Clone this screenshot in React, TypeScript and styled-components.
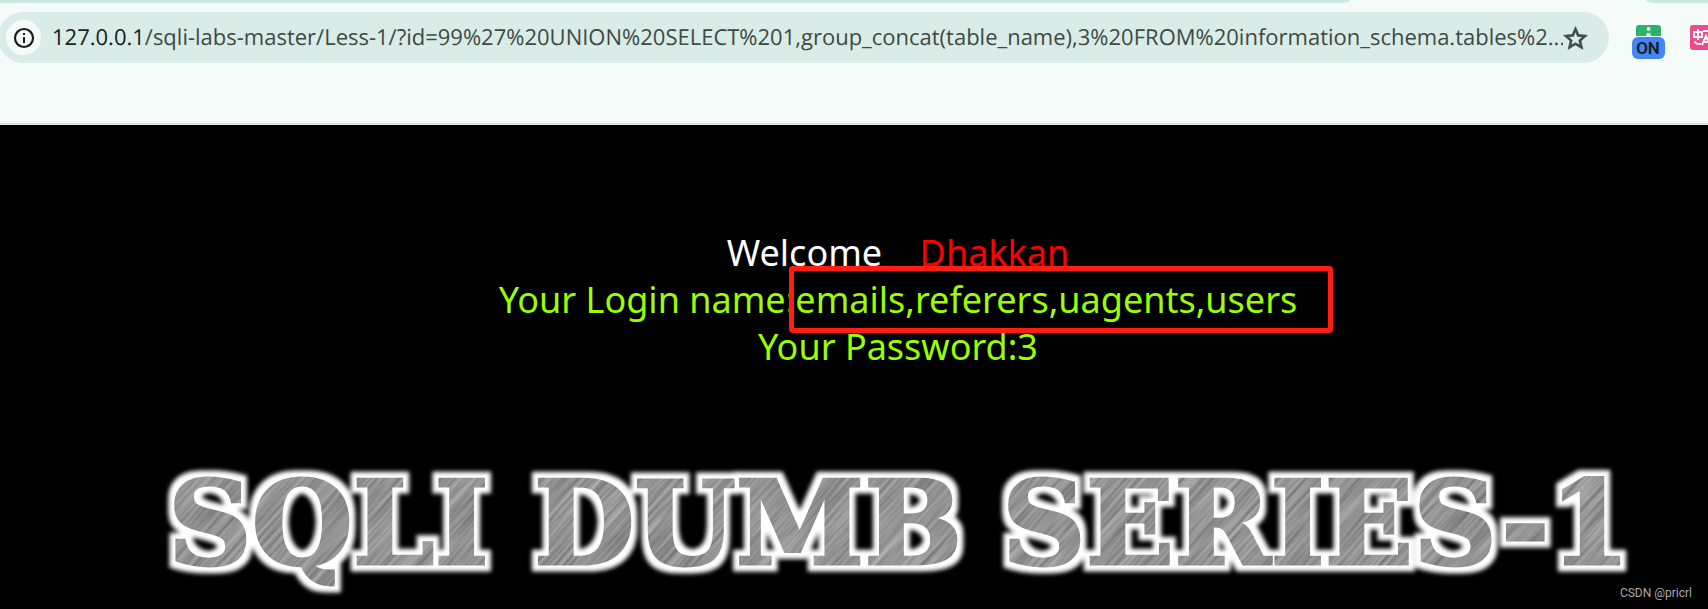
import React from "react";
import styled, { createGlobalStyle } from "styled-components";

const Global = createGlobalStyle`
  * { box-sizing: border-box; }
  body { margin: 0; background: #000; overflow-x: hidden; }
`;

const Page = styled.div`
  min-height: 100vh;
  display: flex;
  flex-direction: column;
  background: #000;
  overflow: hidden;
`;

const Browser = styled.header`
  background: #f5fbf8;
  border-bottom: 2px solid #d9e5e0;
  height: 125px;
  font-family: "Open Sans", "Noto Sans", sans-serif;
  text-rendering: geometricPrecision;
`;

const TabStrip = styled.div`
  display: flex;
  justify-content: space-between;
  height: 3px;
`;

const TabEdge = styled.div<{ $side: "left" | "right" }>`
  background: #cbe8e1;
  ${(p) =>
    p.$side === "left"
      ? "flex: 1; margin-right: 296px; border-bottom-right-radius: 10px 3px;"
      : "width: 62px; border-bottom-left-radius: 10px 3px;"}
`;

const Toolbar = styled.div`
  display: flex;
  align-items: center;
  padding-top: 9px;
`;

const AddressBar = styled.div`
  flex: 1;
  min-width: 0;
  height: 51px;
  margin-left: -2px;
  padding: 0 21px 0 8px;
  border-radius: 26px;
  background: #daece7;
  display: flex;
  align-items: center;
`;

const InfoButton = styled.button`
  width: 35px;
  height: 35px;
  flex: none;
  margin-right: 11px;
  padding: 0;
  border: 0;
  border-radius: 50%;
  background: #f5fbf8;
  display: grid;
  place-items: center;
`;

const Host = styled.label`
  padding-bottom: 2px;
  font-size: 22px;
  line-height: 32px;
  color: #171d1b;
`;

const UrlInput = styled.input`
  flex: 1;
  min-width: 0;
  height: 34px;
  padding: 0 0 2px;
  border: 0;
  outline: 0;
  background: transparent;
  font: 22px "Open Sans", "Noto Sans", sans-serif;
  text-rendering: geometricPrecision;
  color: #3f4946;
`;

const IconButton = styled.button`
  flex: none;
  padding: 0;
  border: 0;
  background: none;
  display: grid;
`;

const Extensions = styled.div`
  display: flex;
  align-items: center;
  gap: 25px;
  width: 99px;
  padding: 9px 0 0 23px;
  overflow: hidden;
`;

const Content = styled.main`
  flex: 1;
  padding: 104px 0 0 88px;
  display: flex;
  flex-direction: column;
  align-items: center;
  position: relative;
`;

const Message = styled.section`
  font-family: "Noto Sans", "Open Sans", sans-serif;
  font-size: 36px;
  line-height: 47px;
  text-align: center;
  white-space: pre;
`;

const Line = styled.p<{ $color: string }>`
  margin: 0;
  color: ${(p) => p.$color};
`;

const Name = styled.span`
  color: #f00;
`;

const Marked = styled.span`
  position: relative;

  &::after {
    content: "";
    position: absolute;
    inset: -9px -36px -9px -6px;
    border: 5px solid #ff1e10;
    border-radius: 4px;
  }
`;

const Logo = styled.svg`
  display: block;
  width: 100%;
  max-width: 1620px;
  margin-top: 69px;
`;

const Watermark = styled.footer`
  position: absolute;
  right: 16px;
  bottom: 8px;
  font: 12px/16px Roboto, "Liberation Sans", sans-serif;
  color: #aaa;
`;

const InfoIcon = () => (
  <svg width="22" height="22" viewBox="0 0 22 22" fill="none">
    <circle cx="11" cy="11" r="9" stroke="#171d1b" strokeWidth="2.2" />
    <path d="M11 10v6M11 6v2" stroke="#171d1b" strokeWidth="2" />
  </svg>
);

const StarIcon = () => (
  <svg width="25" height="24" viewBox="1.5 1.5 21 20" fill="#3f4946" stroke="#3f4946" strokeWidth="0.6">
    <path d="M22 9.24l-7.19-.62L12 2 9.19 8.63 2 9.24l5.46 4.73L5.82 21 12 17.27 18.18 21l-1.63-7.03L22 9.24zM12 15.4l-3.76 2.27 1-4.28-3.32-2.88 4.38-.38L12 6.1l1.71 4.04 4.38.38-3.32 2.88 1 4.28L12 15.4z" />
  </svg>
);

const ProxyIcon = () => (
  <svg width="33" height="34" viewBox="0 0 33 34">
    <path d="M7 0h19a3 3 0 0 1 3 3v8H4V3a3 3 0 0 1 3-3z" fill="#2bb36b" />
    <circle cx="16.5" cy="4" r="2" fill="#e8fff2" />
    <path d="M14 11l1-3h3l1 3z" fill="#e8fff2" />
    <rect y="12" width="33" height="22" rx="6" fill="#4285f4" />
    <text x="16" y="29" textAnchor="middle" fontFamily="Roboto, sans-serif" fontWeight="600" fontSize="17" fill="#171d1b">ON</text>
  </svg>
);

const TranslateIcon = () => (
  <svg width="26" height="34" viewBox="0 0 26 34">
    <rect width="26" height="25" rx="3" fill="#ee4b8b" />
    <path d="M4 7h8v5H4zM8 4v11M5 16c0 3 2 3 6 3M13 6h6v4M12 20l4-9 4 9M14 17h5" fill="none" stroke="#fff" strokeWidth="2" />
  </svg>
);

const words = [
  { text: "SQLI", x: 80 },
  { text: "DUMB", x: 446 },
  { text: "SERIES-1", x: 914 },
];

const SeriesLogo = () => (
  <Logo viewBox="0 0 1620 165" role="img" aria-label="SQLI DUMB SERIES-1">
    <defs>
      <filter id="grain" x="0" y="0" width="100%" height="100%" colorInterpolationFilters="sRGB">
        <feTurbulence type="fractalNoise" baseFrequency="0.012 0.3" numOctaves="3" seed="4" />
        <feColorMatrix values="0.35 0 0 0 0.4  0.35 0 0 0 0.4  0.35 0 0 0 0.4  0 0 0 0 1" />
      </filter>
      <pattern id="metal" width="1800" height="1600" patternUnits="userSpaceOnUse" patternTransform="rotate(-48)">
        <rect width="1800" height="1600" filter="url(#grain)" />
      </pattern>
      <filter id="glow" filterUnits="userSpaceOnUse" x="0" y="0" width="1620" height="165" colorInterpolationFilters="sRGB">
        <feMorphology in="SourceAlpha" operator="dilate" radius="6" result="wide" />
        <feGaussianBlur in="wide" stdDeviation="2" result="soft" />
        <feFlood floodColor="#fff" />
        <feComposite in2="soft" operator="in" result="halo" />
        <feMerge>
          <feMergeNode in="halo" />
          <feMergeNode in="SourceGraphic" />
        </feMerge>
      </filter>
    </defs>
    <g
      filter="url(#glow)"
      fontFamily="DejaVu Serif, serif"
      fontWeight="700"
      fontSize="116"
      fill="url(#metal)"
      stroke="url(#metal)"
      strokeWidth="3"
    >
      {words.map((w) => (
        <text key={w.text} x={w.x} y="125">
          {w.text}
        </text>
      ))}
    </g>
  </Logo>
);

export default function App() {
  return (
    <Page>
      <Global />
      <Browser>
        <TabStrip>
          <TabEdge $side="left" />
          <TabEdge $side="right" />
        </TabStrip>
        <Toolbar>
          <AddressBar>
            <InfoButton aria-label="Site information">
              <InfoIcon />
            </InfoButton>
            <Host htmlFor="url">127.0.0.1</Host>
            <UrlInput
              id="url"
              defaultValue="/sqli-labs-master/Less-1/?id=99%27%20UNION%20SELECT%201,group_concat(table_name),3%20FROM%20information_schema.tables%2..."
            />
            <IconButton aria-label="Bookmark">
              <StarIcon />
            </IconButton>
          </AddressBar>
          <Extensions>
            <IconButton aria-label="Proxy">
              <ProxyIcon />
            </IconButton>
            <IconButton aria-label="Translate">
              <TranslateIcon />
            </IconButton>
          </Extensions>
        </Toolbar>
      </Browser>
      <Content>
        <Message>
          <Line $color="#fff">
            Welcome{"    "}
            <Name>Dhakkan</Name>
          </Line>
          <Line $color="#9f0">
            Your Login name:<Marked>emails,referers,uagents,users</Marked>
          </Line>
          <Line $color="#9f0">Your Password:3</Line>
        </Message>
        <SeriesLogo />
        <Watermark>CSDN @pricrl</Watermark>
      </Content>
    </Page>
  );
}
